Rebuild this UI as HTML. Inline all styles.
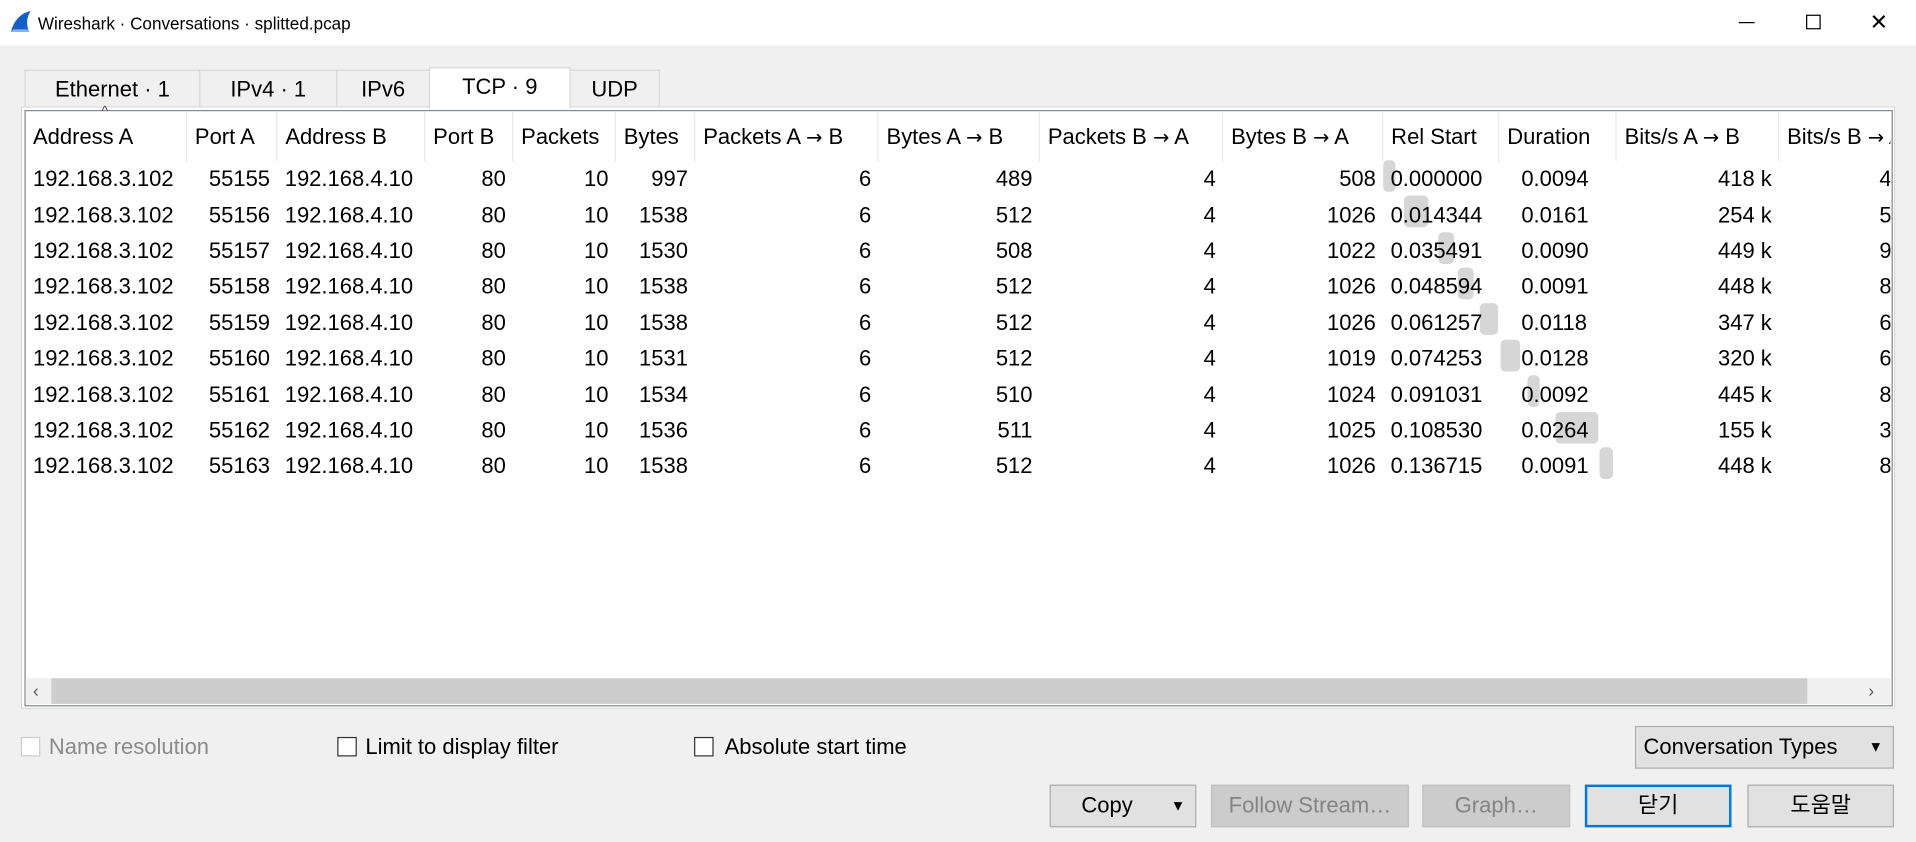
<!DOCTYPE html>
<html><head><meta charset="utf-8"><style>
html,body{margin:0;padding:0;width:1916px;height:842px;overflow:hidden;background:#f0f0f0}
#w{position:absolute;left:0;top:0;width:1568px;height:689px;transform:scale(1.22194,1.2221);transform-origin:0 0;font-family:"Liberation Sans","Noto Sans CJK KR",sans-serif;color:#000;background:#f0f0f0}
.a{position:absolute}
.tab{position:absolute;top:57px;height:30px;border:1px solid #d9d9d9;border-bottom:none;background:#f0f0f0;font-size:18px;line-height:30px;text-align:center;box-sizing:border-box}
table{position:absolute;left:20px;top:92px;border-collapse:collapse;table-layout:fixed;font-size:18px;width:1528px}
td,th{padding:0 5px 0 7px;white-space:nowrap;overflow:hidden;height:29.4px;font-weight:normal;box-sizing:border-box}
th{height:40px;text-align:left;border-right:1px solid #e8e8e8;padding-top:0}
.ar{font-family:"DejaVu Sans",sans-serif;font-size:16px}
.r{text-align:right}
.bar{position:absolute;background:#d6d6d6;border-radius:4px;height:26px}
.btn{position:absolute;top:642px;height:35px;border:1px solid #adadad;background:#e1e1e1;box-sizing:border-box;font-size:18px;line-height:33px;text-align:center}
.dis{background:#cccccc;border-color:#bfbfbf;color:#838383}
.cb{position:absolute;top:603px;width:14px;height:14px;border:1px solid #333;background:#fff}
.lbl{position:absolute;top:598px;font-size:18px;line-height:26px}
</style></head><body><div id="w">
<div class="a" style="left:0;top:0;width:1568px;height:37px;background:#fff"></div>
<svg class="a" style="left:7px;top:8px" width="20" height="20" viewBox="0 0 20 20"><path d="M2 18 C4 10 9 3 18 1 C15 6 14 12 17 18 Z" fill="#1560c8"/><path d="M2 18 L17 18 L16 16 L4 16Z" fill="#8ab4e8"/></svg>
<div class="a" style="left:31px;top:9px;font-size:14px;line-height:20px">Wireshark · Conversations · splitted.pcap</div>
<div class="a" style="left:1423px;top:18px;width:13px;height:1px;background:#000"></div>
<div class="a" style="left:1478px;top:12px;width:10px;height:10px;border:1px solid #000"></div>
<div class="a" style="left:1530px;top:5px;font-size:18px;line-height:26px">✕</div>

<div class="tab" style="left:20px;width:144px">Ethernet · 1</div>
<div class="tab" style="left:163px;width:113px">IPv4 · 1</div>
<div class="tab" style="left:275px;width:77px">IPv6</div>
<div class="tab" style="left:466px;width:74px">UDP</div>
<div class="a" style="left:17px;top:87px;width:1532px;height:491px;border:1px solid #d9d9d9;background:#fff"></div>
<div class="tab" style="left:351px;top:55px;width:116px;height:34px;background:#fff;line-height:30px;z-index:2">TCP · 9</div>
<div class="a" style="left:20px;top:90px;width:1527px;height:486px;border:1px solid #828790;background:#fff"></div>

<div class="bar" style="left:1132px;top:131px;width:10px"></div>
<div class="bar" style="left:1149px;top:160px;width:20px"></div>
<div class="bar" style="left:1177px;top:190px;width:13px"></div>
<div class="bar" style="left:1193px;top:219px;width:13px"></div>
<div class="bar" style="left:1211px;top:248px;width:15px"></div>
<div class="bar" style="left:1228px;top:278px;width:16px"></div>
<div class="bar" style="left:1250px;top:307px;width:10px"></div>
<div class="bar" style="left:1273px;top:337px;width:35px"></div>
<div class="bar" style="left:1309px;top:366px;width:11px"></div>
<div class="a" style="left:83px;top:84px;font-size:12px;color:#555;z-index:3">^</div>

<div class="a" style="left:21px;top:91px;width:1526px;height:462px;overflow:hidden">
<table style="left:-1px;top:1px">
<colgroup><col style="width:132px"><col style="width:74px"><col style="width:121px"><col style="width:72px"><col style="width:84px"><col style="width:65px"><col style="width:150px"><col style="width:132px"><col style="width:150px"><col style="width:131px"><col style="width:95px"><col style="width:96px"><col style="width:133px"><col style="width:93px"></colgroup>
<tr><th>Address A</th><th>Port A</th><th>Address B</th><th>Port B</th><th>Packets</th><th>Bytes</th><th>Packets A <span class="ar">→</span> B</th><th>Bytes A <span class="ar">→</span> B</th><th>Packets B <span class="ar">→</span> A</th><th>Bytes B <span class="ar">→</span> A</th><th>Rel Start</th><th>Duration</th><th>Bits/s A <span class="ar">→</span> B</th><th>Bits/s B <span class="ar">→</span> A</th></tr>
<tr><td>192.168.3.102</td><td class="r">55155</td><td>192.168.4.10</td><td class="r">80</td><td class="r">10</td><td class="r">997</td><td class="r">6</td><td class="r">489</td><td class="r">4</td><td class="r">508</td><td>0.000000</td><td style="padding-left:19px">0.0094</td><td class="r">418 k</td><td class="r" style="padding-right:0">4</td></tr>
<tr><td>192.168.3.102</td><td class="r">55156</td><td>192.168.4.10</td><td class="r">80</td><td class="r">10</td><td class="r">1538</td><td class="r">6</td><td class="r">512</td><td class="r">4</td><td class="r">1026</td><td>0.014344</td><td style="padding-left:19px">0.0161</td><td class="r">254 k</td><td class="r" style="padding-right:0">5</td></tr>
<tr><td>192.168.3.102</td><td class="r">55157</td><td>192.168.4.10</td><td class="r">80</td><td class="r">10</td><td class="r">1530</td><td class="r">6</td><td class="r">508</td><td class="r">4</td><td class="r">1022</td><td>0.035491</td><td style="padding-left:19px">0.0090</td><td class="r">449 k</td><td class="r" style="padding-right:0">9</td></tr>
<tr><td>192.168.3.102</td><td class="r">55158</td><td>192.168.4.10</td><td class="r">80</td><td class="r">10</td><td class="r">1538</td><td class="r">6</td><td class="r">512</td><td class="r">4</td><td class="r">1026</td><td>0.048594</td><td style="padding-left:19px">0.0091</td><td class="r">448 k</td><td class="r" style="padding-right:0">8</td></tr>
<tr><td>192.168.3.102</td><td class="r">55159</td><td>192.168.4.10</td><td class="r">80</td><td class="r">10</td><td class="r">1538</td><td class="r">6</td><td class="r">512</td><td class="r">4</td><td class="r">1026</td><td>0.061257</td><td style="padding-left:19px">0.0118</td><td class="r">347 k</td><td class="r" style="padding-right:0">6</td></tr>
<tr><td>192.168.3.102</td><td class="r">55160</td><td>192.168.4.10</td><td class="r">80</td><td class="r">10</td><td class="r">1531</td><td class="r">6</td><td class="r">512</td><td class="r">4</td><td class="r">1019</td><td>0.074253</td><td style="padding-left:19px">0.0128</td><td class="r">320 k</td><td class="r" style="padding-right:0">6</td></tr>
<tr><td>192.168.3.102</td><td class="r">55161</td><td>192.168.4.10</td><td class="r">80</td><td class="r">10</td><td class="r">1534</td><td class="r">6</td><td class="r">510</td><td class="r">4</td><td class="r">1024</td><td>0.091031</td><td style="padding-left:19px">0.0092</td><td class="r">445 k</td><td class="r" style="padding-right:0">8</td></tr>
<tr><td>192.168.3.102</td><td class="r">55162</td><td>192.168.4.10</td><td class="r">80</td><td class="r">10</td><td class="r">1536</td><td class="r">6</td><td class="r">511</td><td class="r">4</td><td class="r">1025</td><td>0.108530</td><td style="padding-left:19px">0.0264</td><td class="r">155 k</td><td class="r" style="padding-right:0">3</td></tr>
<tr><td>192.168.3.102</td><td class="r">55163</td><td>192.168.4.10</td><td class="r">80</td><td class="r">10</td><td class="r">1538</td><td class="r">6</td><td class="r">512</td><td class="r">4</td><td class="r">1026</td><td>0.136715</td><td style="padding-left:19px">0.0091</td><td class="r">448 k</td><td class="r" style="padding-right:0">8</td></tr>
</table></div>

<div class="a" style="left:21px;top:555px;width:1526px;height:21px;background:#f0f0f0"></div>
<div class="a" style="left:42px;top:555px;width:1437px;height:21px;background:#cdcdcd"></div>
<div class="a" style="left:27px;top:555px;font-size:14px;line-height:21px;color:#555">‹</div>
<div class="a" style="left:1529px;top:555px;font-size:14px;line-height:21px;color:#555">›</div>

<div class="cb" style="left:17px;border-color:#ccc"></div><div class="lbl" style="left:40px;color:#8a8a8a">Name resolution</div>
<div class="cb" style="left:276px"></div><div class="lbl" style="left:299px">Limit to display filter</div>
<div class="cb" style="left:568px"></div><div class="lbl" style="left:593px">Absolute start time</div>

<div class="btn" style="left:1338px;top:594px;width:212px;height:35px;text-align:left;padding-left:6px">Conversation Types<span style="position:absolute;right:8px;font-size:12px">▼</span></div>
<div class="btn" style="left:859px;width:120px;text-align:left;padding-left:25px">Copy<span style="position:absolute;right:8px;font-size:12px">▼</span></div>
<div class="btn dis" style="left:991px;width:162px">Follow Stream…</div>
<div class="btn dis" style="left:1164px;width:121px">Graph…</div>
<div class="btn" style="left:1297px;width:120px;border:2px solid #0078d7;line-height:31px">닫기</div>
<div class="btn" style="left:1430px;width:120px">도움말</div>
</div></body></html>
